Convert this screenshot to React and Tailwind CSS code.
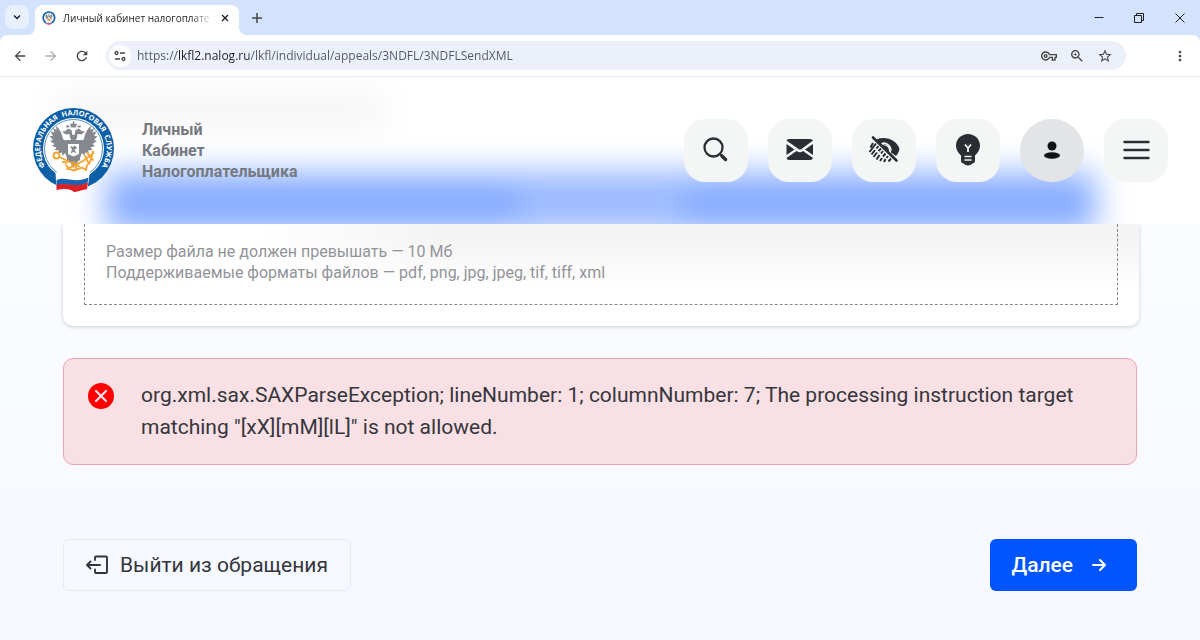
import {
  MdArrowBack,
  MdArrowForward,
  MdRefresh,
  MdMoreVert,
  MdStarBorder,
  MdOutlineZoomIn,
  MdOutlineVpnKey,
} from "react-icons/md";

const URL = "https://lkfl2.nalog.ru/lkfl/individual/appeals/3NDFL/3NDFLSendXML";

// Federal Tax Service emblem, the favicon is the same drawing without the lettering
function Emblem({ className, lettering = true }) {
  return (
    <svg className={className} viewBox="0 0 84 86" aria-hidden="true">
      <circle cx="41.5" cy="41.5" r="40.5" fill="#0d5fa8" />
      <circle cx="41.5" cy="41.5" r="30.5" fill="#fff" />
      <circle cx="41.5" cy="41.5" r="29" fill="none" stroke="#0d5fa8" strokeWidth="0.700" />
      {lettering && (
        <>
          <path id="ring" d="M17.500 64.500 A33.200 33.200 0 1 1 65.500 64.500" fill="none" />
          <text fill="#fff" fontSize="7.300" fontWeight="700" fontFamily="'Open Sans', sans-serif">
            <textPath href="#ring" startOffset="50%" textAnchor="middle">
              {"ФЕДЕРАЛЬНАЯ\u00a0 НАЛОГОВАЯ\u00a0 СЛУЖБА"}
            </textPath>
          </text>
        </>
      )}
      {/* wings */}
      <g fill="#85898f">
        <path d="M31 32 C30 26 27 21 24 19 L24.500 23 L21 21 L22.500 25.500 L18.500 24.500 L21 29 L17.500 29 L21 33 L18 34 L22.500 37 L20 39 L24.500 40.500 L22.500 43 L27 43.500 L26 46.500 L30 45.500 L30.500 49 L33 46 L36 52 V36 Z" />
        <path d="M52 32 C53 26 56 21 59 19 L58.500 23 L62 21 L60.500 25.500 L64.500 24.500 L62 29 L65.500 29 L62 33 L65 34 L60.500 37 L63 39 L58.500 40.500 L60.500 43 L56 43.500 L57 46.500 L53 45.500 L52.500 49 L50 46 L47 52 V36 Z" />
        {/* heads and body */}
        <path d="M41.500 36 L38 31 L37.500 27 L34 27.500 L30 25 L34 23.500 L36 21.500 L39.500 23 L40.500 28 H42.500 L43.500 23 L47 21.500 L49 23.500 L53 25 L49 27.500 L45.500 27 L45 31 Z" />
        <path d="M33 33 H50 L48 53 L45 55 L41.500 61 L38 55 L35 53 Z" />
        <path d="M39 20.500 L38 16.500 L40.500 17 L41 14 H42 L42.500 17 L45 16.500 L44 20.500 Z" />
        <path d="M34.500 20.500 L34 18.500 H37.500 L37 20.500 Z M46 20.500 L45.500 18.500 H49 L48.500 20.500 Z" />
      </g>
      <path d="M36 37 H47 V47 L41.500 49.500 L36 47 Z" fill="#fff" />
      <path d="M38 39 L41 40 L43 38.500 L45 41 L42.500 43 L44.500 46 L41 45 L38.500 46.500 L40 42.500 Z" fill="#85898f" />
      <g fill="none" stroke="#f0a531" strokeWidth="1.900" strokeLinecap="round">
        <circle cx="24.500" cy="48.500" r="3" />
        <path d="M27.500 50 L47 59.500 M43.500 61 L46 56 M40 59.500 L42 55" />
        <path d="M61.500 46 L57 49.500 L51 54 L35 62 M55 45.500 L61 53 M58 55.500 L61 44.500 M53 49 L57 57" />
        <path d="M34 58 L37 62 L42 63.500 L50 60.500 L54 63 L55 58 M31 55 L35 55.500" />
      </g>
      {/* ribbon */}
      <path d="M23.500 66 C33 61 43 71 58 64 L55.500 82 C44 88 38 80 24.500 83 Z" fill="#fff" />
      <path d="M24.500 73 C34 69 43 77 56.500 70.500 L55.500 76 C43 82 35 75 24.500 78.500 Z" fill="#1d62b0" />
      <path d="M24.500 78 C35 74.500 43 81.500 56 75.500 L55 82 C47 84 45 85 42 85 C39 82 33 81 24.500 83 Z" fill="#dd2127" />
    </svg>
  );
}

function SearchIcon() {
  return (
    <svg className="size-8" viewBox="0 0 32 32" fill="none" stroke="#2b2d33" strokeLinecap="round">
      <circle cx="13.500" cy="13.500" r="9" strokeWidth="2.300" />
      <path d="M20 20 L21.500 21.500" strokeWidth="2.300" />
      <path d="M22 22 L25.500 25.500" strokeWidth="3.400" />
    </svg>
  );
}

function MailIcon() {
  return (
    <svg className="size-8" viewBox="0 0 32 32" fill="#2b2d33">
      <path d="M5 5 H26 Q28.500 5 29 6.500 L17.500 15 Q16 16 14.500 15 L2.500 6.500 Q3 5 5 5 Z" />
      <path d="M2.500 10 L10.500 15.500 L2.500 21 Z M29 10 L21 15.500 L29 21 Z" />
      <path d="M2.500 24 L12.500 17 Q16 19.500 19 17 L29 24 Q28.500 26 26 26 H5 Q3 26 2.500 24 Z" />
    </svg>
  );
}

function LowVisionIcon() {
  return (
    <svg className="size-8" viewBox="0 0 32 32" fill="none" stroke="#2b2d33">
      <path
        d="M8.500 5.500 C18 1.500 29 6.500 31.500 15 C31 17.500 30 19.500 28 22 L23 18.500 C23.500 13 18 9 13 11 Z"
        fill="#2b2d33"
        stroke="none"
      />
      <path d="M13.500 10 C18 7.500 23.500 12.500 22.500 17" stroke="#f4f5f5" strokeWidth="1.800" />
      <path d="M13.500 11.500 C18 10 21.500 13.500 21 18 Z" fill="#2b2d33" stroke="none" />
      <path d="M5 3.500 L28.500 26.500" strokeWidth="2.600" strokeLinecap="round" />
      <path
        d="M5 9 L2.500 13.500 M8 9.500 L1.500 18 M10.500 12 L8.500 14.500 M7 16 L3.500 20.500 M13 14.500 L10.500 17 M9 18.500 L5.500 23 M15 17 L13 19.500 M11.500 21 L8.500 25.500 M17.500 19.500 L15 22.500 M14 24 L12 27 M20 22 L18.500 24 M17.500 25 L16 28 M23 24.500 L20.500 27.500"
        strokeWidth="2"
      />
    </svg>
  );
}

function BulbIcon() {
  return (
    <svg className="size-8" viewBox="0 0 32 32" fill="#2b2d33">
      <path d="M16 0 C22.500 0 28 5 28 11.500 C28 16 25.500 19 23 21.500 V27 Q23 29 20.500 29.500 Q18.500 31.500 16 31.500 Q13.500 31.500 11.500 29.500 Q9 29 9 27 V21.500 C6.500 19 4 16 4 11.500 C4 5 9.500 0 16 0 Z" />
      <path
        d="M13 10.500 L16 14 L19 10.500 M16 14 V18"
        fill="none"
        stroke="#f4f5f5"
        strokeWidth="1.800"
      />
      <path d="M12.500 22.500 H19.500 M12.500 26 H19.500" stroke="#f4f5f5" strokeWidth="1.600" />
    </svg>
  );
}

function UserIcon() {
  return (
    <svg className="size-8" viewBox="0 0 32 32" fill="#111214">
      <circle cx="16" cy="12" r="4.500" />
      <ellipse cx="16" cy="21.500" rx="8" ry="3.200" />
    </svg>
  );
}

function MenuIcon() {
  return (
    <svg className="size-8" viewBox="0 0 32 32" stroke="#2b2d33" strokeWidth="2.400" strokeLinecap="round">
      <path d="M4.500 8 H28.500 M4.500 16 H28.500 M4.500 24 H28.500" />
    </svg>
  );
}

const actions = [
  { label: "Поиск", icon: SearchIcon },
  { label: "Сообщения", icon: MailIcon },
  { label: "Версия для слабовидящих", icon: LowVisionIcon },
  { label: "Подсказки", icon: BulbIcon },
  { label: "Профиль", icon: UserIcon, round: true },
  { label: "Меню", icon: MenuIcon },
];

function TabStrip() {
  return (
    <div className="flex h-[35px] bg-[#d3e3fd] pl-[5px] text-[#1f1f1f]">
      <button className="mt-[5px] flex size-6 items-center justify-center rounded-lg bg-[#e9f0fd]" aria-label="Поиск вкладок">
        <svg className="size-2" viewBox="0 0 8 8" fill="none" stroke="currentColor" strokeWidth="1.500">
          <path d="M1 2.500 L4 5.500 L7 2.500" />
        </svg>
      </button>
      <div className="relative mt-[5px] ml-1.5 flex w-[204px] items-center rounded-t-lg bg-white pr-1.5 pl-[7px] before:absolute before:bottom-0 before:-left-2 before:size-2 before:bg-[radial-gradient(circle_at_0_0,transparent_8px,white_8px)] after:absolute after:-right-2 after:bottom-0 after:size-2 after:bg-[radial-gradient(circle_at_100%_0,transparent_8px,white_8px)]">
        <Emblem className="mb-1 size-[14px] shrink-0" lettering={false} />
        <span className="mb-1 ml-[7px] flex-1 mask-r-from-85% text-[10px] leading-4 whitespace-nowrap">
          Личный кабинет налогоплате
        </span>
        <button className="mb-1 ml-1 flex size-4 items-center justify-center" aria-label="Закрыть вкладку">
          <svg className="size-2" viewBox="0 0 8 8" stroke="currentColor" strokeWidth="1.400">
            <path d="M1 1 L7 7 M7 1 L1 7" />
          </svg>
        </button>
      </div>
      <button className="ml-2 flex w-5 items-center justify-center" aria-label="Новая вкладка">
        <svg className="size-2.5" viewBox="0 0 10 10" stroke="#444746" strokeWidth="1.500">
          <path d="M5 0 V10 M0 5 H10" />
        </svg>
      </button>
      <div className="ml-auto flex">
        <button className="flex w-10 items-center justify-center" aria-label="Свернуть">
          <svg className="size-2.5" viewBox="0 0 10 10" stroke="currentColor">
            <path d="M0.500 4.500 H9.500" />
          </svg>
        </button>
        <button className="flex w-10 items-center justify-center" aria-label="Развернуть">
          <svg className="size-2.5" viewBox="0 0 10 10" fill="none" stroke="currentColor">
            <path d="M0.500 2.500 H7.500 V9.500 H0.500 Z M2.500 2.500 V0.500 H9.500 V7.500 H7.500" />
          </svg>
        </button>
        <button className="flex w-[41px] items-center justify-center" aria-label="Закрыть">
          <svg className="size-2.5" viewBox="0 0 10 10" stroke="currentColor">
            <path d="M0.500 0.500 L9.500 9.500 M9.500 0.500 L0.500 9.500" />
          </svg>
        </button>
      </div>
    </div>
  );
}

function Toolbar() {
  return (
    <div className="bg-[#d3e3fd]">
      <div className="flex h-[42px] items-center rounded-t-lg border-b border-[#e8e8e8] bg-white px-3 text-[#474747]">
        <button className="flex size-4 items-center justify-center" aria-label="Назад">
          <MdArrowBack className="size-4" />
        </button>
        <button className="ml-[15px] flex size-4 items-center justify-center text-[#adadad]" aria-label="Вперёд">
          <MdArrowForward className="size-4" />
        </button>
        <button className="ml-[15px] flex size-4 items-center justify-center" aria-label="Обновить">
          <MdRefresh className="size-4" />
        </button>
        <div className="ml-4 flex h-[29px] flex-1 items-center rounded-full bg-[#ebf0fa] pr-[13px] pl-[3px]">
          <button className="flex size-[22px] items-center justify-center rounded-full bg-white" aria-label="Сведения о сайте">
            <svg className="size-3" viewBox="0 0 12 12" fill="none" stroke="currentColor" strokeWidth="1.300">
              <circle cx="2.500" cy="3" r="1.500" />
              <path d="M6 3 H11 M1 9 H6" />
              <circle cx="9.500" cy="9" r="1.500" />
            </svg>
          </button>
          {/* the host part of the address is darker than the rest */}
          <input
            className="ml-1.5 min-w-0 flex-1 bg-[linear-gradient(90deg,#54575b_40px,#1f1f1f_40px,#1f1f1f_112px,#54575b_112px)] bg-clip-text text-xs text-transparent outline-none"
            type="text"
            aria-label="Адресная строка"
            defaultValue={URL}
          />
          <div className="flex items-center gap-3">
            <button aria-label="Пароли">
              <MdOutlineVpnKey className="size-4" />
            </button>
            <button aria-label="Масштаб">
              <MdOutlineZoomIn className="size-4" />
            </button>
            <button aria-label="Добавить в закладки">
              <MdStarBorder className="size-4" />
            </button>
          </div>
        </div>
        <button className="ml-[46px] flex size-4 items-center justify-center" aria-label="Меню браузера">
          <MdMoreVert className="size-[18px]" />
        </button>
      </div>
    </div>
  );
}

function Header() {
  return (
    <header className="relative h-[147px] overflow-hidden bg-white">
      {/* page content that shows through the frosted header */}
      <div className="absolute top-5 left-14 h-7 w-[330px] bg-[#f3f3f3] blur-lg" />
      <div className="absolute top-24 right-[104px] -bottom-2 left-[106px] flex justify-center bg-[#86acff] blur-lg">
        <div className="mt-4 h-9 w-40 bg-[#a4bfff]" />
      </div>
      <div className="relative flex h-full items-center px-8 pb-px">
        <Emblem className="h-[86px] w-[84px]" />
        <p className="ml-[26px] text-base leading-[21px] font-bold text-[#75797f]">
          Личный
          <br />
          Кабинет
          <br />
          Налогоплательщика
        </p>
        <nav className="ml-auto flex gap-5">
          {actions.map(({ label, icon: Icon, round }) => (
            <button
              key={label}
              aria-label={label}
              className={
                round
                  ? "flex h-[63px] w-16 items-center justify-center rounded-full bg-[#e3e4e5]"
                  : "flex h-[63px] w-16 items-center justify-center rounded-[21px] bg-[#f4f5f5]"
              }
            >
              <Icon />
            </button>
          ))}
        </nav>
      </div>
    </header>
  );
}

export default function App() {
  return (
    <div className="flex min-h-screen flex-col font-['Roboto',sans-serif]">
      <div className="font-['Open_Sans','Noto_Sans',sans-serif]">
        <TabStrip />
        <Toolbar />
      </div>
      <Header />
      <main className="flex-1 bg-linear-to-b from-[#fbfcff] to-[#f5f8ff] px-[63px]">
        <section className="-mr-0.5 rounded-b-[10px] bg-white bg-[linear-gradient(90deg,white_18%,transparent_35%),linear-gradient(#f4f4f4_15%,white_65%)] px-[21px] pb-[21px] shadow-[0_1px_4px_rgba(0,0,0,0.18)]">
          <div className="border border-t-0 border-dashed border-[#8a8a8a] px-[21px] pt-[17px] pb-[21px] text-base leading-[21px] text-[#929499]">
            <p>Размер файла не должен превышать — 10 Мб</p>
            <p>Поддерживаемые форматы файлов — pdf, png, jpg, jpeg, tif, tiff, xml</p>
          </div>
        </section>

        <div role="alert" className="mt-8 flex rounded-[10px] border border-[#eda5ae] bg-[#f9e0e4] pt-5 pr-8 pb-[21px] pl-6 text-[21px] leading-8 text-[#35363c]">
          <svg className="mt-1 mr-[27px] size-[26px] shrink-0" viewBox="0 0 26 26" aria-hidden="true">
            <circle cx="13" cy="13" r="13" fill="#fe0000" />
            <path d="M8 8 L18 18 M18 8 L8 18" stroke="#f9e0e4" strokeWidth="2.200" strokeLinecap="round" />
          </svg>
          <p>
            org.xml.sax.SAXParseException; lineNumber: 1; columnNumber: 7; The processing instruction target
            matching "[xX][mM][lL]" is not allowed.
          </p>
        </div>

        <div className="mt-[74px] mb-12 flex justify-between text-[21px] leading-8">
          <button className="flex h-[52px] items-center rounded-md border border-[#e6e8ec] px-[22px] text-[#35363c]">
            <svg className="mr-3 size-[22px]" viewBox="0 0 22 22" fill="none" stroke="currentColor" strokeWidth="1.900" strokeLinejoin="round" strokeLinecap="round">
              <path d="M9 6 V3.500 Q9 2.500 10 2.500 H20 Q21 2.500 21 3.500 V18 Q21 19 20 19 H10 Q9 19 9 18 V15.500" />
              <path d="M14 11 H1 M4.500 7.500 L1 11 L4.500 14.500" />
            </svg>
            Выйти из обращения
          </button>
          <button className="flex h-[52px] items-center rounded-md bg-[#0055ff] pr-[30px] pl-[21px] font-medium text-white">
            Далее
            <svg className="ml-[18px] size-4" viewBox="0 0 16 16" fill="none" stroke="currentColor" strokeWidth="2" strokeLinejoin="round" strokeLinecap="round">
              <path d="M2 8 H14 M9 3 L14 8 L9 13" />
            </svg>
          </button>
        </div>
      </main>
    </div>
  );
}
